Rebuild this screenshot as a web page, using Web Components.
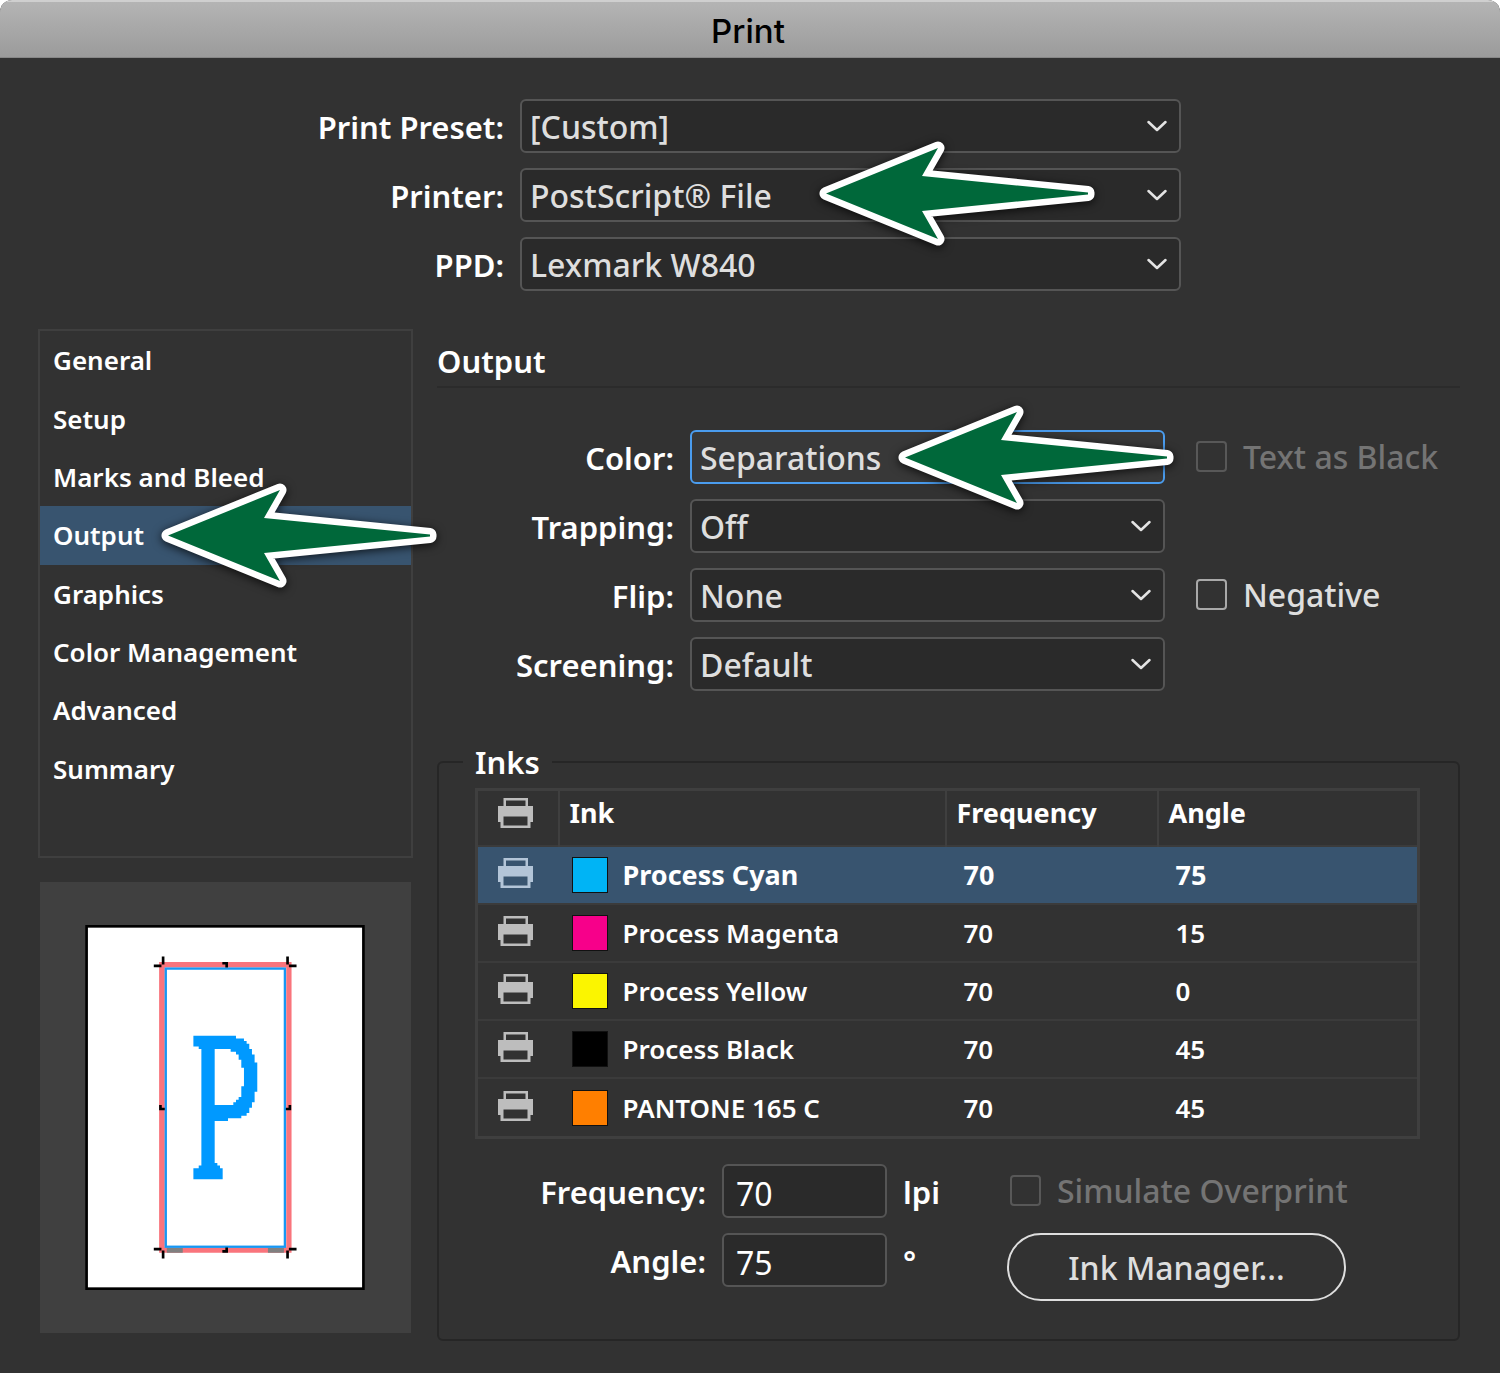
<!DOCTYPE html>
<html lang="en">
<head>
<meta charset="utf-8">
<title>Print</title>
<style>
  html { background: #fff; }
  body { margin: 0; font-family: "Noto Sans", "Open Sans", sans-serif; font-size: 32px; font-weight: 500; line-height: 44px; color: #fff; }
</style>
</head>
<body>
<print-dialog></print-dialog>

<script>
const define = (name, html, setup) => {
  const template = document.createElement('template');
  template.innerHTML = '<style>*{box-sizing:border-box}</style>' + html;
  customElements.define(name, class extends HTMLElement {
    constructor() {
      super();
      this.attachShadow({ mode: 'open' }).append(template.content.cloneNode(true));
    }
    connectedCallback() {
      if (setup && !this.ready) { this.ready = true; setup(this, this.shadowRoot); }
    }
  });
};

define('callout-arrow', `
<style>
  :host { position: absolute; display: block; width: 276px; height: 105px; pointer-events: none; z-index: 2; }
  svg { display: block; overflow: visible; filter: drop-shadow(0 2px 5px rgba(0,0,0,.75)); }
</style>
<svg width="276" height="105" viewBox="0 0 276 105" aria-hidden="true">
  <path d="M7 52.5 L119 7 L103 35 L269 51.5 V53.5 L103 70 L119 98 Z" fill="#00683a" stroke="#fff" stroke-width="13" stroke-linejoin="round" paint-order="stroke"/>
</svg>`);

define('print-titlebar', `
<style>
  :host { display: flex; justify-content: center; align-items: center; height: 58px; background: linear-gradient(#b4b4b4, #9b9b9b); border-top: 2px solid #cfcfcf; border-bottom: 1px solid #878787; color: #000; box-sizing: border-box; }
  h1 { margin: 0; padding: 2px 4px 0 0; font: 500 33px/44px Inter, Roboto, sans-serif; }
</style>
<h1><slot></slot></h1>`);

define('print-select', `
<style>
  :host { display: grid; grid-template-columns: var(--label-width) minmax(0, 1fr); column-gap: 16px; align-items: center; position: relative; }
  label { padding-top: 2px; text-align: right; white-space: nowrap; font-size: 31px; font-weight: 600; }
  .box { display: grid; align-items: center; }
  select { grid-area: 1/1; appearance: none; width: 100%; height: 54px; margin: 0; padding: 2px 56px 0 8px; border: 2px solid #555; border-radius: 6px; background: #2a2a2a; color: #dedede; font: inherit; outline: none; }
  :host([active]) select { background: #383838; border-color: #4a9cee; }
  svg { grid-area: 1/1; justify-self: end; margin-right: 14px; pointer-events: none; }
</style>
<label for="s"></label>
<div class="box">
  <select id="s"><option></option></select>
  <svg width="20" height="12" viewBox="0 0 20 12" fill="none" stroke="#e4e4e4" stroke-width="2.5" stroke-linecap="round" stroke-linejoin="round"><path d="M1.500 2 L10 10 L18.500 2"/></svg>
</div>
<slot></slot>`, (el, root) => {
  root.querySelector('label').textContent = el.getAttribute('label');
  root.querySelector('option').textContent = el.getAttribute('value');
});

define('print-check', `
<style>
  :host { display: block; color: #dedede; --edge: #a9a9a9; }
  :host([disabled]) { color: #747474; --edge: #585858; }
  label { display: flex; align-items: center; gap: 16px; height: 54px; white-space: nowrap; }
  input { appearance: none; flex: none; width: 31px; height: 31px; margin: 0 0 2px; border: 2px solid var(--edge); border-radius: 4px; background: none; }
</style>
<label><input type="checkbox"><span><slot></slot></span></label>`, (el, root) => {
  root.querySelector('input').disabled = el.hasAttribute('disabled');
});

define('print-number', `
<style>
  :host { display: grid; grid-template-columns: var(--label-width) 165px auto; justify-content: start; column-gap: 16px; align-items: center; font-size: 31px; font-weight: 600; }
  label, .unit { padding-top: 2px; text-align: right; white-space: nowrap; }
  input { width: 100%; height: 54px; margin: 0; padding: 4px 12px 0; border: 2px solid #555; border-radius: 6px; background: #2a2a2a; color: #fff; font: inherit; font-size: 32px; font-weight: 400; }
</style>
<label for="n"></label><input id="n" type="text" inputmode="numeric"><span class="unit"><slot></slot></span>`, (el, root) => {
  root.querySelector('label').textContent = el.getAttribute('label');
  root.querySelector('input').value = el.getAttribute('value');
});

define('print-sections', `
<style>
  :host { display: block; height: 529px; border: 2px solid #3f3f3f; box-sizing: border-box; font-size: 26px; font-weight: 600; }
  ul { display: grid; grid-auto-rows: 1fr; height: 467px; margin: 0; padding: 0; list-style: none; }
  li { display: grid; position: relative; }
  a { display: flex; align-items: center; padding-left: 13px; color: #fff; text-decoration: none; }
  a[aria-current] { background: #38546f; }
  callout-arrow { left: 121px; top: -23px; }
</style>
<nav><ul>
  <li><a href="#general">General</a></li>
  <li><a href="#setup">Setup</a></li>
  <li><a href="#marks">Marks and Bleed</a></li>
  <li><a href="#output" aria-current="page">Output</a><callout-arrow></callout-arrow></li>
  <li><a href="#graphics">Graphics</a></li>
  <li><a href="#color">Color Management</a></li>
  <li><a href="#advanced">Advanced</a></li>
  <li><a href="#summary">Summary</a></li>
</ul></nav>`);

define('page-preview', `
<style>
  :host { display: block; padding: 43px 45px; margin: 0 2px; background: #404040; }
  svg { display: block; }
</style>
<svg width="280" height="365" viewBox="75 75 840 1097" role="img" aria-label="Page preview">
  <rect x="79" y="79" width="832" height="1089" fill="#fff" stroke="#000" stroke-width="8"/>
  <path fill="#f9747c" fill-rule="evenodd" d="M297 186H695V1060H297Z M314 203V1044H679V203Z"/>
  <path fill="#808080" d="M320 1046H368V1060H320Z M624 1046H672V1060H624Z"/>
  <rect x="317" y="206" width="358" height="836" fill="#fff" stroke="#1697f3" stroke-width="7"/>
  <path fill="none" stroke="#000" stroke-width="8" d="M309 170V194M281 198H304 M683 170V194M687 198H710 M309 1077V1053M281 1049H304 M683 1077V1053M687 1049H710"/>
  <path fill="#000" d="M487 186H504V203H496V194H487Z M496 1044H504V1060H487V1052H496Z M297 616H305V624H314V632H297Z M686 616H694V632H678V624H686Z"/>
  <path fill="#0099ff" fill-rule="evenodd" d="M400 408H528V416H552V424H560V432H568V448H576V464H584V488H592V576H584V608H576V624H568V640H560V648H544V656H504V664H464V790H472V798H480V806H488V839H400V806H416V798H424V448H416V440H400Z M464 448V616H520V608H528V600H536V592H544V560H552V504H544V480H536V464H528V456H512V448Z"/>
</svg>`);

define('printer-icon', `
<style>
  :host { display: block; color: #bdbdbd; }
  svg { display: block; margin: auto; }
</style>
<svg width="35" height="30" viewBox="0 0 35 30" aria-hidden="true">
  <path fill="currentColor" fill-rule="evenodd" d="M5.500 0H30V8H35V24H32.500V30H2.500V24H0V8H5.500Z M8 2.500V8H27.500V2.500Z M5.500 18.500V27.500H29.500V18.500Z"/>
</svg>`);

define('ink-table', `
<style>
  :host { display: block; font-size: 26px; }
  table { width: 100%; height: 351px; table-layout: fixed; border-collapse: collapse; border: 3px solid #3f3f3f; }
  th, td { padding: 0; text-align: left; font-weight: 600; line-height: 36px; }
  thead tr { height: 56px; }
  th { font-size: 27px; font-weight: 700; border-left: 2px solid #3f3f3f; padding: 0 0 10px 10px; }
  th:first-child { padding: 0 4px 10px 0; }
  tbody tr { border-top: 2px solid #3b3b3b; }
  td { padding-left: 18px; }
  td:first-child { padding: 0 6px 4px 0; }
  td:nth-child(2) { padding-left: 13px; }
  .ink { display: flex; align-items: center; gap: 15px; white-space: nowrap; }
  i { width: 36px; height: 36px; border: 1px solid #111; }
  .on { background: #38546f; }
  .on td { font-size: 27px; font-weight: 700; }
  .on printer-icon { color: #b3c5d8; }
  .c1 { width: 82px; } .c2 { width: 387px; } .c3 { width: 212px; }
</style>
<table>
  <colgroup><col class="c1"><col class="c2"><col class="c3"><col></colgroup>
  <thead><tr><th><printer-icon></printer-icon></th><th>Ink</th><th>Frequency</th><th>Angle</th></tr></thead>
  <tbody></tbody>
</table>`, (el, root) => {
  const inks = [
    ['Process Cyan', '#00b4f5', 70, 75],
    ['Process Magenta', '#f7008a', 70, 15],
    ['Process Yellow', '#fbf500', 70, 0],
    ['Process Black', '#000000', 70, 45],
    ['PANTONE 165 C', '#ff7f00', 70, 45]
  ];
  root.querySelector('tbody').innerHTML = inks.map(([name, color, freq, angle], n) =>
    `<tr class="${n ? '' : 'on'}"><td><printer-icon></printer-icon></td><td><div class="ink"><i style="background:${color}"></i>${name}</div></td><td>${freq}</td><td>${angle}</td></tr>`).join('');
});

define('output-panel', `
<style>
  :host { display: block; padding-top: 10px; min-width: 0; }
  h2 { margin: 0 0 42px; padding-bottom: 3px; border-bottom: 2px solid #2b2b2b; font-size: 31px; line-height: 44px; font-weight: 600; }
  .options { display: grid; grid-template-columns: minmax(0, 1fr) 264px; gap: 15px 31px; --label-width: 237px; }
  .options print-select { grid-column: 1; }
  .options callout-arrow { right: -9px; top: -25px; }
  fieldset { margin: 49px 0 0; padding: 4px 38px 38px 36px; border: 2px solid #262626; border-radius: 6px; min-width: 0; }
  legend { padding: 0 12px; margin-left: -12px; font-size: 31px; font-weight: 600; }
  .controls { display: flex; justify-content: space-between; margin-top: 25px; padding-right: 74px; --label-width: 231px; }
  .left, .right { display: grid; grid-template-columns: minmax(0, 1fr); gap: 15px; align-content: start; }
  .right { width: 339px; }
  .right print-check { padding-left: 3px; }
  button { height: 68px; padding: 2px 0 0; border: 2px solid #dedede; border-radius: 34px; background: none; color: #dedede; font: inherit; }
</style>
<h2>Output</h2>
<div class="options">
  <print-select label="Color:" value="Separations" active><callout-arrow></callout-arrow></print-select>
  <print-check disabled>Text as Black</print-check>
  <print-select label="Trapping:" value="Off"></print-select>
  <print-select label="Flip:" value="None"></print-select>
  <print-check>Negative</print-check>
  <print-select label="Screening:" value="Default"></print-select>
</div>
<fieldset>
  <legend>Inks</legend>
  <ink-table></ink-table>
  <div class="controls">
    <div class="left">
      <print-number label="Frequency:" value="70">lpi</print-number>
      <print-number label="Angle:" value="75">°</print-number>
    </div>
    <div class="right">
      <print-check disabled>Simulate Overprint</print-check>
      <button type="button">Ink Manager...</button>
    </div>
  </div>
</fieldset>`);

define('print-dialog', `
<style>
  :host { display: block; min-height: 100vh; background: #323232; border-radius: 12px 12px 0 0; overflow: hidden; }
  .presets { display: grid; gap: 15px; padding: 41px 319px 38px 0; --label-width: 504px; }
  .presets callout-arrow { right: 86px; top: -27px; }
  .main { display: grid; grid-template-columns: 375px minmax(0, 1fr); gap: 24px; padding: 0 40px 32px 38px; }
  .side { display: grid; gap: 24px; align-content: start; }
</style>
<print-titlebar>Print</print-titlebar>
<div class="presets">
  <print-select label="Print Preset:" value="[Custom]"></print-select>
  <print-select label="Printer:" value="PostScript® File"><callout-arrow></callout-arrow></print-select>
  <print-select label="PPD:" value="Lexmark W840"></print-select>
</div>
<div class="main">
  <div class="side">
    <print-sections></print-sections>
    <page-preview></page-preview>
  </div>
  <output-panel></output-panel>
</div>`);
</script>
</body>
</html>
